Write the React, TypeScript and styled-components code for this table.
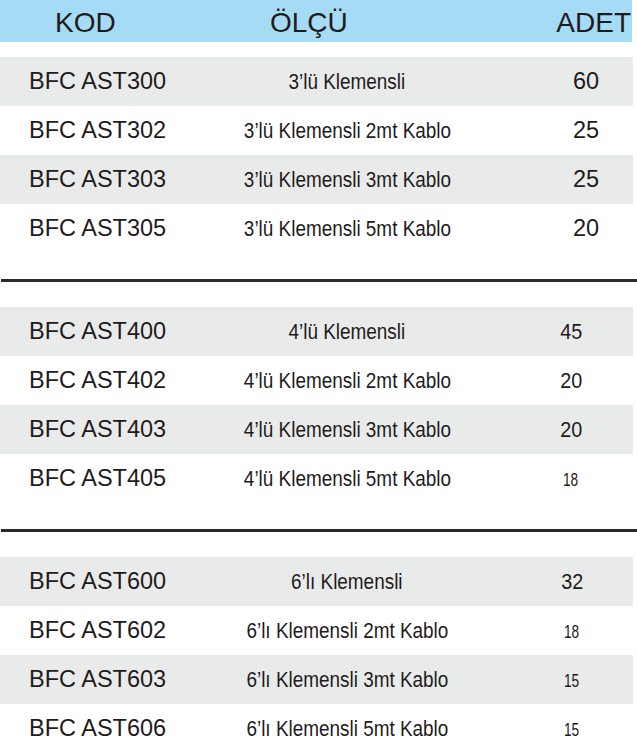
import React from "react";
import styled, { createGlobalStyle } from "styled-components";

type Item = { code: string; size: string; qty: string; small?: boolean };
type Group = { items: Item[]; qtyPad: number; narrowQty: boolean };

const groups: Group[] = [
  {
    qtyPad: 45,
    narrowQty: false,
    items: [
      { code: "BFC AST300", size: "3’lü Klemensli", qty: "60" },
      { code: "BFC AST302", size: "3’lü Klemensli 2mt Kablo", qty: "25" },
      { code: "BFC AST303", size: "3’lü Klemensli 3mt Kablo", qty: "25" },
      { code: "BFC AST305", size: "3’lü Klemensli 5mt Kablo", qty: "20" },
    ],
  },
  {
    qtyPad: 15,
    narrowQty: true,
    items: [
      { code: "BFC AST400", size: "4’lü Klemensli", qty: "45" },
      { code: "BFC AST402", size: "4’lü Klemensli 2mt Kablo", qty: "20" },
      { code: "BFC AST403", size: "4’lü Klemensli 3mt Kablo", qty: "20" },
      { code: "BFC AST405", size: "4’lü Klemensli 5mt Kablo", qty: "18", small: true },
    ],
  },
  {
    qtyPad: 17,
    narrowQty: true,
    items: [
      { code: "BFC AST600", size: "6’lı Klemensli", qty: "32" },
      { code: "BFC AST602", size: "6’lı Klemensli 2mt Kablo", qty: "18", small: true },
      { code: "BFC AST603", size: "6’lı Klemensli 3mt Kablo", qty: "15", small: true },
      { code: "BFC AST606", size: "6’lı Klemensli 5mt Kablo", qty: "15", small: true },
    ],
  },
];

const App: React.FC = () => {
  return (
    <>
      <GlobalStyle />
      <Page>
        <Header>
          <span>KOD</span>
          <span>ÖLÇÜ</span>
          <span>ADET</span>
        </Header>

        {groups.map((group, gi) => (
          <React.Fragment key={gi}>
            {gi > 0 && <Divider />}
            <Block>
              {group.items.map((item, i) => (
                <Row key={item.code} $shaded={i % 2 === 0}>
                  <Code>{item.code}</Code>
                  <Size>
                    <Narrow>{item.size}</Narrow>
                  </Size>
                  <Qty $pad={group.qtyPad}>
                    {group.narrowQty ? (
                      <NarrowQty $small={item.small}>{item.qty}</NarrowQty>
                    ) : (
                      item.qty
                    )}
                  </Qty>
                </Row>
              ))}
            </Block>
          </React.Fragment>
        ))}
      </Page>
    </>
  );
};

export default App;

/* ================= styled ================= */

const GlobalStyle = createGlobalStyle`
  html, body {
    margin: 0;
    padding: 0;
    background: #ffffff;
  }
  body {
    font-family: "Liberation Sans", Arial, sans-serif;
    color: #1f1b1c;
  }
`;

const Page = styled.div`
  width: 637px;
  height: 749px;
  overflow: hidden;
  background: #ffffff;
`;

const Header = styled.div`
  display: grid;
  grid-template-columns: 215px 1fr auto;
  width: 632px;
  height: 42px;
  box-sizing: border-box;
  padding: 4px 1px 0 55px;
  background: #a6dbf5;
  font-size: 28px;
  line-height: 38px;
  color: #1f1b1c;
`;

const Block = styled.div`
  margin-top: 15px;
`;

const Divider = styled.div`
  height: 3px;
  margin: 26px 0 25px 1px;
  background: #2b2b2b;
`;

const Row = styled.div<{ $shaded: boolean }>`
  display: grid;
  grid-template-columns: 171px 294px 1fr;
  align-items: center;
  width: 633px;
  height: 49px;
  box-sizing: border-box;
  padding-left: 29px;
  background: ${(p) => (p.$shaded ? "#e9ebea" : "#ffffff")};
  font-size: 23.5px;
  color: #1f1b1c;
`;

const Code = styled.div`
  white-space: nowrap;
`;

const Size = styled.div`
  text-align: center;
  white-space: nowrap;
`;

const Narrow = styled.span`
  display: inline-block;
  font-size: 22px;
  transform: scaleX(0.86);
  transform-origin: center;
`;

const Qty = styled.div<{ $pad: number }>`
  text-align: center;
  padding-left: ${(p) => p.$pad}px;
`;

const NarrowQty = styled.span<{ $small?: boolean }>`
  display: inline-block;
  font-size: ${(p) => (p.$small ? "19px" : "22px")};
  transform: scaleX(${(p) => (p.$small ? 0.72 : 0.9)});
  transform-origin: center;
`;
